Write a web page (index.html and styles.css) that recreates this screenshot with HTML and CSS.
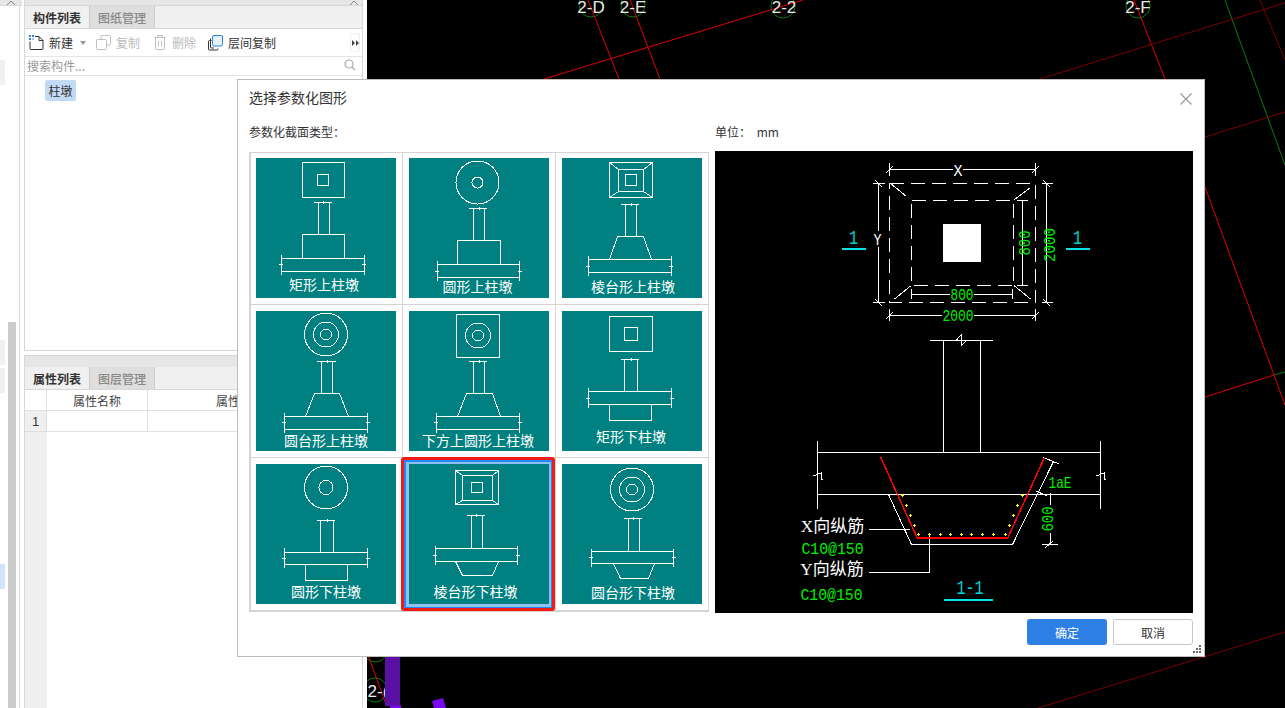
FILE: index.html
```html
<!DOCTYPE html>
<html lang="zh">
<head>
<meta charset="utf-8">
<title>选择参数化图形</title>
<link rel="stylesheet" href="styles.css">
</head>
<body>
<div class="app">
  <aside class="rail">
    <div class="rail-head"><svg class="chev" width="10" height="5" viewBox="0 0 10 5"><path d="M1 5 5 1 9 5"/></svg></div>
    <div class="rail-body">
      <div class="chips">
        <div class="chip chip-a"></div>
        <div class="chip chip-b"></div>
        <div class="chip chip-c"></div>
        <div class="chip chip-d"></div>
      </div>
      <div class="scrollbar"></div>
      <div class="rail-line"></div>
    </div>
  </aside>

  <div class="panels">
    <section class="panel panel-top">
      <div class="panel-head"><svg class="chev" width="10" height="5" viewBox="0 0 10 5"><path d="M1 5 5 1 9 5"/></svg></div>
      <div class="tabs">
        <div class="tab tab-on">构件列表</div>
        <div class="tab tab-off">图纸管理</div>
      </div>
      <div class="toolbar">
        <div class="tool">
          <svg width="15" height="15" viewBox="0 0 15 15" class="ico"><path class="ink" d="M6 1.5H10L14 5.5V13.5a1 1 0 0 1-1 1H2a1 1 0 0 1-1-1V6.5"/><path class="ink" d="M10 1.5V5.5H14"/><rect class="bl" x="0" y="0" width="2" height="2"/><rect class="bl" x="3" y="0" width="2" height="2"/><rect class="bl" x="0" y="3" width="2" height="2"/><rect class="bl2" x="3" y="3" width="2" height="2"/></svg>
          <span>新建</span>
        </div>
        <svg class="caret" width="6" height="4" viewBox="0 0 6 4"><path d="M0 0H6L3 4Z"/></svg>
        <div class="tool tool-off tool-copy">
          <svg width="15" height="15" viewBox="0 0 15 15" class="ico"><path class="mute" d="M5 4.5V1.5a1 1 0 0 1 1-1H13.500a1 1 0 0 1 1 1V9a1 1 0 0 1-1 1H10.500"/><rect class="mute" x=".5" y="4.500" width="10" height="10" rx="1"/></svg>
          <span>复制</span>
        </div>
        <div class="tool tool-off tool-del">
          <svg width="12" height="15" viewBox="0 0 12 15" class="ico"><path class="mute" d="M0 2.500H12M3.500 2.500V.5H8.500V2.500M1.500 2.500V13a1.500 1.500 0 0 0 1.500 1.500H9A1.500 1.500 0 0 0 10.500 13V2.500M4.500 5.500V11.500M7.500 5.500V11.500"/></svg>
          <span>删除</span>
        </div>
        <div class="tool tool-floor">
          <svg width="15" height="16" viewBox="0 0 15 16" class="ico"><path class="ink" d="M3.500 5.500H1.500A1 1 0 0 0 .5 6.500V14a1 1 0 0 0 1 1H9A1 1 0 0 0 10 14V13.500M2.500 3.500V12A1 1 0 0 0 3.500 13H6"/><rect class="blbox" x="4.500" y=".5" width="10" height="10.500" rx="1.500"/></svg>
          <span>层间复制</span>
        </div>
        <div class="more"><svg width="7" height="6" viewBox="0 0 7 6"><path d="M0 0 3 3 0 6ZM4 0 7 3 4 6Z"/></svg></div>
      </div>
      <div class="search">
        <span>搜索构件...</span>
        <svg width="12" height="12" viewBox="0 0 12 12"><circle cx="5" cy="5" r="4"/><path d="M8 8 11 11"/></svg>
      </div>
      <div class="tree"><span class="node">柱墩</span></div>
    </section>

    <section class="panel panel-bottom">
      <div class="panel-head panel-head-tall"></div>
      <div class="tabs">
        <div class="tab tab-on">属性列表</div>
        <div class="tab tab-off">图层管理</div>
      </div>
      <div class="props">
        <div class="prow prow-head"><div class="pnum pnum-head"></div><div class="pname">属性名称</div><div class="pval">属性值</div></div>
        <div class="prow"><div class="pnum">1</div><div class="pname"></div><div class="pval"></div></div>
        <div class="pfill"><div class="pfill-gutter"></div></div>
      </div>
    </section>
  </div>

  <main class="canvas">
    <svg class="cad" viewBox="367 0 918 708" width="918" height="708">
      <g class="c-green">
        <circle cx="591" cy="5" r="12"/><circle cx="633" cy="5" r="12"/><circle cx="783" cy="6" r="12"/><circle cx="1138" cy="6" r="12"/>
        <circle cx="375" cy="690" r="12"/><circle cx="375" cy="650" r="12"/>
        <path d="M1225 0 1285 165M1274 375 1285 372"/>
      </g>
      <g class="c-red">
        <path d="M544 79 803 0M588 0 619 79M630 0 660 79M1134 0 1165 79"/>
        <path d="M1205 187 1285 405M1205 397 1274 375M367 652 385 702"/>
      </g>
      <g class="c-dark">
        <path d="M1040 79 1285 3M1260 0 1285 60M1205 137 1285 112M1038 708 1285 632"/>
      </g>
      <g class="c-label">
        <text x="591" y="13">2-D</text><text x="633" y="13">2-E</text><text x="784" y="13">2-2</text><text x="1138" y="13">2-F</text><text x="378" y="697">2-(</text>
      </g>
      <rect class="c-purple" x="385" y="657" width="15" height="49"/>
      <path class="c-violet" d="M390 708V706L401 705V708ZM432 701 443 698 446 708H434Z"/>
    </svg>
  </main>
</div>

<div class="dialog">
  <header class="dlg-head">
    <span>选择参数化图形</span>
    <svg class="close" width="12" height="12" viewBox="0 0 12 12"><path d="M.5 .5 11.500 11.500M11.500 .5 .5 11.500"/></svg>
  </header>
  <div class="dlg-labels">
    <span class="lbl-left">参数化截面类型：</span>
    <span class="lbl-unit">单位： mm</span>
  </div>
  <div class="dlg-body">
    <div class="tiles">
      <div class="cell">
        <svg class="tile" viewBox="0 0 140 140" width="140" height="140">
          <rect x="46.500" y="4.500" width="42" height="35"/><rect x="61.500" y="16.500" width="11" height="11"/>
          <path d="M58 44.500H76M62.500 44.500V76.500M73.500 44.500V76.500M67.500 43V46"/>
          <rect x="46.500" y="76.500" width="42" height="24"/>
          <path d="M25.500 100.500H108.500M25.500 113.500H108.500M25.500 97V117M108.500 97V117M23 106.500H27M106 106.500H110"/>
          <text x="68" y="132">矩形上柱墩</text>
        </svg>
      </div>
      <div class="cell">
        <svg class="tile" viewBox="0 0 140 140" width="140" height="140">
          <circle cx="68.500" cy="24.500" r="21.500"/><circle cx="68.500" cy="24.500" r="5.500"/>
          <path d="M60 50.500H78M64.500 50.500V82.500M75.500 50.500V82.500M70.500 49V52"/>
          <rect x="48.500" y="82.500" width="43" height="24"/>
          <path d="M28.500 106.500H110.500M28.500 119.500H110.500M28.500 103V123M110.500 103V123M26 113.500H30M109 113.500H113"/>
          <text x="68.500" y="134">圆形上柱墩</text>
        </svg>
      </div>
      <div class="cell">
        <svg class="tile" viewBox="0 0 140 140" width="140" height="140">
          <rect x="47.500" y="4.500" width="43" height="35"/><rect x="56.500" y="11.500" width="25" height="22"/><rect x="63.500" y="16.500" width="11" height="11"/>
          <path d="M47.500 4.500 56.500 11.500M90.500 4.500 81.500 11.500M47.500 39.500 56.500 33.500M90.500 39.500 81.500 33.500"/>
          <path d="M59 46.500H77M63.500 46.500V78.500M74.500 46.500V78.500M69.500 45V48"/>
          <path d="M47.500 101.500 55.500 78.500H81.500L89.500 101.500"/>
          <path d="M26.500 101.500H109.500M26.500 114.500H109.500M26.500 98V118M109.500 98V118M24 108.500H28M107 108.500H111"/>
          <text x="71" y="134">棱台形上柱墩</text>
        </svg>
      </div>
      <div class="cell">
        <svg class="tile" viewBox="0 0 140 140" width="140" height="140">
          <circle cx="70" cy="23.500" r="21.500"/><circle cx="70" cy="23.500" r="12.500"/><circle cx="70" cy="23.500" r="5.500"/>
          <path d="M61 50.500H80M65.500 50.500V82.500M76.500 50.500V82.500M71.500 49V52"/>
          <path d="M49.500 105.500 58.500 82.500H83.500L92.500 105.500"/>
          <path d="M28.500 105.500H111.500M28.500 118.500H111.500M28.500 102V122M111.500 102V122M26 111.500H30M110 111.500H114"/>
          <text x="70" y="135">圆台形上柱墩</text>
        </svg>
      </div>
      <div class="cell">
        <svg class="tile" viewBox="0 0 140 140" width="140" height="140">
          <rect x="47.500" y="3.500" width="43" height="43"/><circle cx="69" cy="24.500" r="12.500"/><circle cx="69" cy="24.500" r="5.500"/>
          <path d="M60 50.500H78M64.500 50.500V82.500M75.500 50.500V82.500M70.500 49V52"/>
          <path d="M48.500 105.500 57.500 82.500H83.500L91.500 105.500"/>
          <path d="M27.500 105.500H110.500M27.500 118.500H110.500M27.500 102V122M110.500 102V122M25 111.500H29M109 111.500H113"/>
          <text x="69" y="135">下方上圆形上柱墩</text>
        </svg>
      </div>
      <div class="cell">
        <svg class="tile" viewBox="0 0 140 140" width="140" height="140">
          <rect x="47.500" y="5.500" width="43" height="35"/><rect x="62.500" y="16.500" width="13" height="13"/>
          <path d="M59 48.500H77M62.500 48.500V80.500M75.500 48.500V80.500M69.500 47V50"/>
          <path d="M26.500 80.500H109.500M26.500 93.500H109.500M26.500 77V97M109.500 77V97M24 87.500H28M108 87.500H112"/>
          <path d="M47.500 93.500V109.500H89.500V93.500"/>
          <text x="69" y="131">矩形下柱墩</text>
        </svg>
      </div>
      <div class="cell">
        <svg class="tile" viewBox="0 0 140 140" width="140" height="140">
          <circle cx="70" cy="23.500" r="21.500"/><circle cx="70" cy="23.500" r="7"/>
          <path d="M61 56.500H79M64.500 56.500V88.500M77.500 56.500V88.500M71.500 55V58"/>
          <path d="M28.500 88.500H111.500M28.500 100.500H111.500M28.500 84V104M111.500 84V104M26 94.500H30M110 94.500H114"/>
          <path d="M49.500 100.500V116.500H91.500V100.500"/>
          <text x="70" y="133">圆形下柱墩</text>
        </svg>
      </div>
      <div class="cell cell-picked">
        <svg class="tile" viewBox="0 0 140 140" width="140" height="140">
          <rect x="46.500" y="6.500" width="43" height="34"/><rect x="53.500" y="11.500" width="30" height="25"/><rect x="62.500" y="18.500" width="11" height="10"/>
          <path d="M46.500 6.500 53.500 11.500M89.500 6.500 83.500 11.500M46.500 40.500 53.500 36.500M89.500 40.500 83.500 36.500"/>
          <path d="M58 51.500H76M62.500 51.500V84.500M73.500 51.500V84.500M67.500 50V53"/>
          <path d="M26.500 84.500H108.500M26.500 97.500H108.500M26.500 82V101M108.500 82V101M24 91.500H28M107 91.500H111"/>
          <path d="M46.500 97.500 53.500 111.500H83.500L89.500 97.500"/>
          <text x="66.500" y="133">棱台形下柱墩</text>
        </svg>
        <div class="ring"><div class="ring-inner"></div></div>
      </div>
      <div class="cell">
        <svg class="tile" viewBox="0 0 140 140" width="140" height="140">
          <circle cx="70" cy="25.500" r="21.500"/><circle cx="70" cy="25.500" r="12.500"/><circle cx="70" cy="25.500" r="5.500"/>
          <path d="M62 54.500H80M66.500 54.500V87.500M77.500 54.500V87.500M71.500 53V56"/>
          <path d="M29.500 87.500H111.500M29.500 99.500H111.500M29.500 85V103M111.500 85V103M27 93.500H31M110 93.500H114"/>
          <path d="M51.500 99.500 58.500 114.500H86.500L92.500 99.500"/>
          <text x="71" y="134">圆台形下柱墩</text>
        </svg>
      </div>
    </div>

    <svg class="preview" viewBox="715 151 478 462" width="478" height="462">
      <g class="pv-w">
        <path d="M889.500 169.500H953M963 169.500H1035.500M889.500 163V176M1035.500 163V176M886 173 893 166M1032 173 1039 166"/>
        <path d="M873 183.500H885M873 302.500H885M878.500 183.500V231M878.500 247V302.500M875 180 882 187M875 299 882 306"/>
        <path d="M1042 183.500H1053M1042 302.500H1053M1046.500 183.500V302.500M1043 180 1050 187M1043 299 1050 306"/>
        <path d="M1017 200.500H1028M1017 285.500H1028M1022.500 200.500V285.500"/>
        <path d="M911.500 294.500H950M974 294.500H1012.500M911.500 289V299M1012.500 289V299"/>
        <path d="M889.500 315.500H942M974 315.500H1035.500M889.500 309V321M1035.500 309V321M886 319 893 312M1032 319 1039 312"/>
        <path d="M890 183 906.500 196.500M1030.500 187.500 1014 200M910.500 286 894.500 299M1014 285.500 1030.500 299"/>
        <rect class="dash" x="889.500" y="183.500" width="146" height="119"/>
        <rect class="dash" x="911.500" y="200.500" width="102" height="85"/>
        <path d="M930 340.500H992.500M943.500 340.500V452.500M980.500 340.500V452.500"/>
        <path d="M956 340.500 961 335V346L966 341"/>
        <path d="M817.500 452.500H1100.500M817.500 494.500H1100.500M817.500 441V509M1100.500 441V509"/>
        <path d="M813 476 821 473V479H823M1096 476 1104 473V479H1106"/>
        <path d="M888.500 494.500 911.500 544.500H1012.500L1053.500 461.500M1043.500 457.500 1059 464"/>
        <path d="M869 529.500H910M869 572.500H929.500V535"/>
        <path d="M1050.500 493V505M1050.500 533V544.500M1042 544.500H1058M1045 548 1053 541M1036 491 1047 496"/>
      </g>
      <rect class="pv-solid" x="943" y="224" width="38" height="38"/>
      <path class="pv-red" d="M880.500 457 917 537.500H1008L1044.500 457.500"/>
      <path class="pv-red pv-red-b" d="M917 537.500H1008"/>
      <path class="pv-yellow" d="M901 495H904M902.500 493.500V496.500M905 505H908M906.500 503.500V506.500M909 515H912M910.500 513.500V516.500M913 525H916M914.500 523.500V526.500M917 534H920M918.500 532.500V535.500M928 534H931M929.500 532.500V535.500M939 534H942M940.500 532.500V535.500M949 534H952M950.500 532.500V535.500M960 534H963M961.500 532.500V535.500M970 534H973M971.500 532.500V535.500M981 534H984M982.500 532.500V535.500M992 534H995M993.500 532.500V535.500M1004 534H1007M1005.500 532.500V535.500M1008 525H1011M1009.500 523.500V526.500M1012 515H1015M1013.500 513.500V516.500M1016 505H1019M1017.500 503.500V506.500M1021 495H1024M1022.500 493.500V496.500"/>
      <rect class="pv-cyan" x="842" y="248" width="24" height="2"/>
      <rect class="pv-cyan" x="1066" y="248" width="24" height="2"/>
      <rect class="pv-cyan" x="944" y="599" width="49" height="2"/>
      <g class="pv-t-cyan">
        <text x="853.500" y="244" textLength="9" lengthAdjust="spacingAndGlyphs">1</text>
        <text x="1077.500" y="244" textLength="9" lengthAdjust="spacingAndGlyphs">1</text>
        <text x="970" y="594" textLength="27" lengthAdjust="spacingAndGlyphs">1-1</text>
      </g>
      <g class="pv-t-white">
        <text x="958" y="176" textLength="9" lengthAdjust="spacingAndGlyphs">X</text>
        <text x="877.500" y="245" textLength="8" lengthAdjust="spacingAndGlyphs">Y</text>
      </g>
      <g class="pv-t-green">
        <text x="958" y="321" textLength="31" lengthAdjust="spacingAndGlyphs">2000</text>
        <text x="962" y="300" textLength="23" lengthAdjust="spacingAndGlyphs">800</text>
        <text x="1055" y="245" textLength="34" lengthAdjust="spacingAndGlyphs" transform="rotate(-90 1055 245)">2000</text>
        <text x="1030" y="243" textLength="25" lengthAdjust="spacingAndGlyphs" transform="rotate(-90 1030 243)">800</text>
        <text x="1053" y="519" textLength="25" lengthAdjust="spacingAndGlyphs" transform="rotate(-90 1053 519)">600</text>
        <text x="1060" y="488" textLength="23" lengthAdjust="spacingAndGlyphs">1aE</text>
        <text x="832.500" y="554" textLength="62" lengthAdjust="spacingAndGlyphs">C10@150</text>
        <text x="831.500" y="600" textLength="62" lengthAdjust="spacingAndGlyphs">C10@150</text>
      </g>
      <g class="pv-t-cjk">
        <text x="832.500" y="532">X向纵筋</text>
        <text x="832" y="575">Y向纵筋</text>
      </g>
    </svg>
  </div>
  <footer class="dlg-foot">
    <button class="btn btn-ok" type="button">确定</button>
    <button class="btn btn-no" type="button">取消</button>
  </footer>
  <svg class="grip" width="8" height="8" viewBox="0 0 8 8"><path d="M6 0H8V2H6ZM3 3H5V5H3ZM6 3H8V5H6ZM0 6H2V8H0ZM3 6H5V8H3ZM6 6H8V8H6Z"/></svg>
</div>
</body>
</html>
```
FILE: styles.css
```css
* { box-sizing: border-box; }
html, body { margin: 0; padding: 0; width: 100%; height: 100%; overflow: hidden; background: #fff; }
body { font-family: "Noto Sans CJK SC", "Noto Sans", sans-serif; font-size: 12px; color: #333; position: relative; }

.app { display: flex; width: 1285px; height: 708px; overflow: hidden; }

/* left rail */
.rail { width: 24px; flex: none; display: flex; flex-direction: column; }
.rail-head { height: 6px; width: 22px; background: #e6e6e6; border-bottom: 1px solid #d8d8d8; display: flex; justify-content: center; overflow: hidden; }
.chev { display: block; flex: none; }
.chev path { fill: none; stroke: #888; stroke-width: 1; }
.rail-body { flex: 1; display: flex; }
.chips { width: 8px; flex: none; display: flex; flex-direction: column; }
.chip { width: 5px; height: 25px; background: #f0f0f0; }
.chip-a { margin-top: 54px; }
.chip-b { margin-top: 255px; }
.chip-c { margin-top: 3px; }
.chip-d { margin-top: 171px; background: #d2e4fd; }
.scrollbar { width: 8px; flex: none; margin-top: 316px; background: #cbcbcb; }
.rail-line { width: 1px; margin-left: 3px; background: #d8d8d8; }

/* panels */
.panels { width: 339px; flex: none; display: flex; flex-direction: column; gap: 4px; }
.panel { border: 1px solid #d8d8d8; border-top: 0; display: flex; flex-direction: column; background: #fff; }
.panel-top { height: 351px; }
.panel-bottom { flex: 1; border-top: 1px solid #d8d8d8; border-bottom: 0; }
.panel-head { height: 6px; flex: none; background: #e6e6e6; border-bottom: 1px solid #d8d8d8; display: flex; justify-content: flex-end; padding-right: 3px; overflow: hidden; }
.panel-head-tall { height: 11px; border-bottom: 0; }
.tabs { display: flex; height: 23px; flex: none; background: #f0f0f0; border-bottom: 1px solid #d8d8d8; }
.tab { width: 65px; display: flex; align-items: center; justify-content: center; font-size: 12px; border-right: 1px solid #ccc; }
.tab-on { font-weight: 700; color: #333; background: #f0f0f0; }
.tab-off { color: #888; background: #dedede; font-weight: 500; }

.toolbar { height: 28px; flex: none; display: flex; align-items: center; padding-left: 4px; border-bottom: 1px solid #e4e4e4; }
.tool { display: flex; align-items: center; gap: 5px; color: #333; }
.ico { display: block; flex: none; }
.ico path, .ico rect { fill: none; stroke-width: 1; }
.ico .ink { stroke: #333; }
.ico .mute { stroke: #c0c0c0; }
.ico .bl { fill: #2f80e4; stroke: none; }
.ico .bl2 { fill: #a8c8f4; stroke: none; }
.ico .blbox { stroke: #2f80e4; fill: #e6f0fd; }
.caret { margin-left: 7px; flex: none; }
.caret path { fill: #999; }
.tool-off { color: #bbb; }
.tool-copy { margin-left: 10px; }
.tool-del { margin-left: 14px; gap: 6px; }
.tool-floor { margin-left: 12px; }
.more { margin-left: auto; margin-right: 2px; width: 10px; height: 19px; border: 1px solid #eee; border-radius: 3px; display: flex; align-items: center; justify-content: center; }
.more path { fill: #444; }
.more svg { flex: none; }

.search { height: 19px; flex: none; display: flex; align-items: center; justify-content: space-between; padding: 0 6px 2px 2px; border-bottom: 1px solid #e4e4e4; color: #999; }
.search svg { flex: none; }
.search circle, .search path { fill: none; stroke: #aaa; stroke-width: 1.2; }
.tree { flex: 1; padding: 4px 0 0 20px; }
.node { display: inline-block; height: 21px; line-height: 21px; width: 31px; text-align: center; background: #c3daf4; border-radius: 2px; color: #333; }

.props { flex: 1; display: flex; flex-direction: column; }
.prow { display: grid; grid-template-columns: 22px 101px 1fr; height: 21px; border-bottom: 1px solid #dfdfdf; flex: none; }
.pnum { background: #efefef; border-right: 1px solid #dfdfdf; display: flex; align-items: center; justify-content: center; font-family: "Liberation Sans", sans-serif; font-size: 13px; }
.pnum-head { background: #fff; }
.pname { border-right: 1px solid #dfdfdf; display: flex; align-items: center; justify-content: center; color: #444; }
.pval { display: flex; align-items: center; padding-left: 68px; color: #444; }
.pfill { flex: 1; display: flex; }
.pfill-gutter { width: 22px; background: #efefef; }

/* canvas */
.canvas { flex: 1; min-width: 0; background: #000; margin-left: 4px; overflow: hidden; }
.cad { display: block; fill: none; }
.cad g path, .cad circle { fill: none; stroke-width: 1; }
.c-green path, .c-green circle { stroke: #0a7d0a; }
.c-red path { stroke: #e00000; }
.c-dark path { stroke: #780000; }
.c-label text { fill: #e8e8e8; font-family: "Liberation Sans", sans-serif; font-size: 17px; text-anchor: middle; }
.c-purple { fill: #5a0fa5; }
.c-violet { fill: #7a08f0; }

/* dialog */
.dialog { position: absolute; left: 237px; top: 79px; width: 968px; height: 578px; background: #fff; border: 1px solid #bdbdbd; padding: 0 11px; display: flex; flex-direction: column; }
.dlg-head { height: 37px; flex: none; display: flex; align-items: center; justify-content: space-between; font-size: 14px; color: #333; padding: 0 1px 3px 0; }
.close { flex: none; margin-top: 3px; }
.close path { stroke: #999; stroke-width: 1.2; fill: none; }
.dlg-labels { height: 34px; flex: none; display: flex; align-items: flex-start; padding-top: 7px; font-size: 12px; color: #333; line-height: 16px; }
.lbl-left { width: 466px; }
.lbl-unit { word-spacing: 3px; }
.dlg-body { display: flex; height: 462px; flex: none; gap: 6px; }
.tiles { width: 460px; height: 460px; margin-top: 1px; flex: none; display: grid; grid-template-columns: 151px 152px 152px; grid-template-rows: 151px 152px 152px; gap: 1px; background: #d4d4d4; border: solid #d4d4d4; border-width: 1px 1px 2px 2px; }
.cell { background: #fff; display: flex; justify-content: flex-end; align-items: flex-end; padding: 0 6px 6px 0; position: relative; }
.tile { display: block; flex: none; background: #008080; }
.tile rect, .tile circle, .tile path { fill: none; stroke: #fff; stroke-width: 1; shape-rendering: crispEdges; }
.tile text { fill: #fff; font-size: 14px; text-anchor: middle; font-family: "Noto Sans CJK SC", sans-serif; }
.cell-picked { z-index: 1; }
.ring { position: absolute; left: -2px; top: -1px; right: 0; bottom: -1px; border: 3px solid #f01c14; border-radius: 3px; }
.ring-inner { width: 100%; height: 100%; border: solid #1a8cff; border-width: 2px 1px 1px 2px; box-shadow: inset 3px 2px 0 #92c0f4, inset -2px -3px 0 #92c0f4; }
.preview { display: block; flex: none; background: #000; }
.pv-w path { fill: none; stroke: #fff; stroke-width: 1; shape-rendering: crispEdges; }
.pv-w .dash { fill: none; stroke: #fff; stroke-width: 1; stroke-dasharray: 14 7; shape-rendering: crispEdges; }
.pv-solid { fill: #fff; }
.pv-red { fill: none; stroke: #ff0000; stroke-width: 1.5; shape-rendering: crispEdges; }
.pv-red-b { stroke-width: 2; }
.pv-yellow { fill: none; stroke: #ffff00; stroke-width: 1; shape-rendering: crispEdges; }
.pv-cyan { fill: #00e6e6; }
.pv-t-cyan text, .pv-t-white text, .pv-t-green text { font-family: "Liberation Mono", monospace; font-size: 17px; text-anchor: middle; }
.pv-t-cyan text { fill: #00d8d8; font-size: 20px; }
.pv-t-white text { fill: #fff; }
.pv-t-green text { fill: #00f000; }
.pv-t-cjk text { fill: #fff; font-family: "Liberation Serif", "Noto Sans CJK SC", serif; font-size: 17px; text-anchor: middle; }
.dlg-foot { display: flex; justify-content: flex-end; gap: 6px; margin-top: 6px; flex: none; }
.btn { width: 80px; height: 26px; border-radius: 3px; font: 12px "Noto Sans CJK SC", sans-serif; padding: 0; }
.btn-ok { background: #2f80e4; border: 0; color: #fff; }
.btn-no { background: #fff; border: 1px solid #c8c8c8; color: #333; }
.grip { position: absolute; right: 3px; bottom: 3px; }
.grip path { fill: #666; }
```
